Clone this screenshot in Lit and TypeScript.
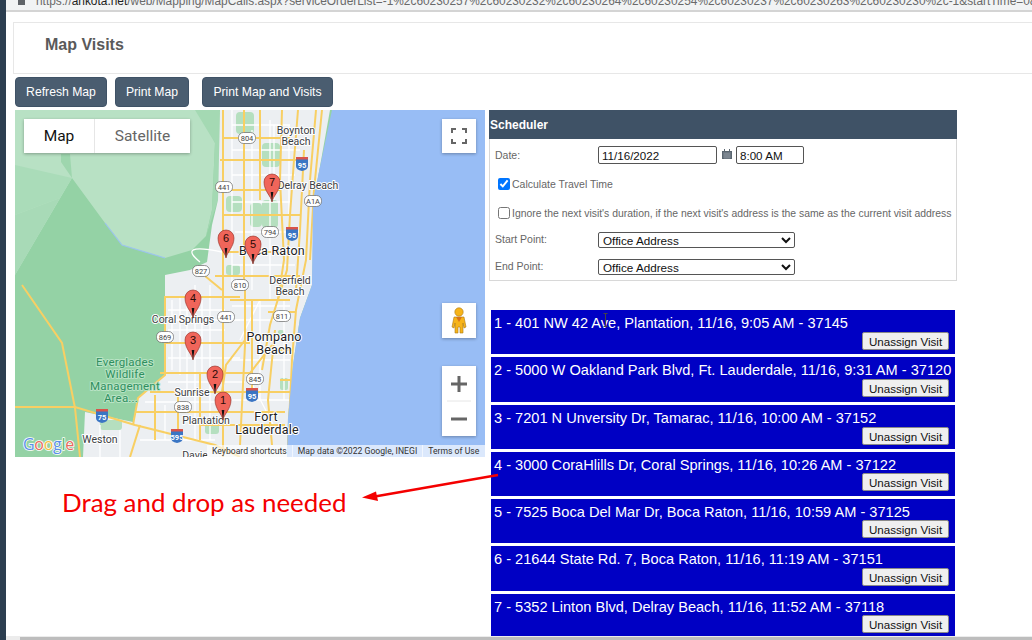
import { LitElement, html, css, svg } from "lit";
import { customElement } from "lit/decorators.js";

const VISITS = [
  ["1 - 401 NW 42 Ave, Plantation, 11/16, 9:05 AM - 37145", 44],
  ["2 - 5000 W Oakland Park Blvd, Ft. Lauderdale, 11/16, 9:31 AM - 37120", 45],
  ["3 - 7201 N Unversity Dr, Tamarac, 11/16, 10:00 AM - 37152", 44],
  ["4 - 3000 CoraHlills Dr, Coral Springs, 11/16, 10:26 AM - 37122", 44],
  ["5 - 7525 Boca Del Mar Dr, Boca Raton, 11/16, 10:59 AM - 37125", 44],
  ["6 - 21644 State Rd. 7, Boca Raton, 11/16, 11:19 AM - 37151", 45],
  ["7 - 5352 Linton Blvd, Delray Beach, 11/16, 11:52 AM - 37118", 44],
] as [string, number][];

const MAJOR = [
  "M22 285L62 343L75 408L80 457",
  "M15 407H75L135 425L215 445L240 457",
  "M223 110V457", "M244 110V290", "M260 110V200", "M282 110L280 180L284 260L278 300",
  "M298 110L294 160L290 215L287 270L270 325L262 370",
  "M316 110L310 180L306 260L296 310L292 360L288 445",
  "M322 110L314 190L310 260", "M304 150L300 230L296 290",
  "M222 138H290", "M220 160H300", "M222 190H280", "M222 215H300", "M222 252H290", "M215 276H300",
  "M240 297H165V375L138 398L133 425", "M165 343H250", "M160 373H250L272 345", "M150 392H290", "M135 412H285",
  "M155 395V440", "M140 425L130 457", "M245 340L226 365L222 392", "M178 392V440", "M200 373V440",
  "M275 330L268 400L272 445", "M245 290V345L240 445", "M280 380H293", "M205 276L222 290", "M230 300H290", "M252 300V392",
  "M200 425H285", "M268 312H296", "M256 350H292",
];
const MINOR = [
  "M232 110V290", "M252 130V290", "M270 120V300", "M195 285V440", "M180 297V375", "M210 285V440", "M172 300V370", "M187 300V392", "M202 300V373",
  "M168 320H240", "M168 358H240", "M168 310H225", "M168 330H225", "M232 320H290", "M232 360H290", "M232 400H290", "M168 382H245", "M232 306H290",
  "M232 150H300", "M232 175H295", "M235 232H300", "M232 125H290", "M232 202H290", "M232 265H295", "M200 262C185 250 190 245 222 252",
  "M100 425V457", "M120 430V457", "M140 440H215", "M165 405V440", "M145 402H215", "M260 300V400", "M284 300V400",
  "M250 380L276 430", "M260 300L240 340", "M274 125V200", "M289 125V215",
];
const SHIELDS: [string, number, number][] = [
  ["441", 224, 187], ["441", 226, 317], ["827", 201, 271], ["804", 247, 138], ["794", 270, 232],
  ["A1A", 313, 201], ["811", 282, 316], ["845", 255, 379], ["869", 165, 337], ["838", 183, 407], ["810", 240, 285],
];
const INTERSTATES: [string, number, number][] = [
  ["95", 302, 164], ["95", 292, 234], ["95", 252, 395], ["75", 102, 416], ["595", 177, 436],
];
const LABELS: [string, number, number, string?][] = [
  ["Boynton", 296, 134], ["Beach", 296, 145], ["Delray Beach", 308, 189], ["Deerfield", 290, 284], ["Beach", 290, 295],
  ["Coral Springs", 183, 323], ["Sunrise", 192, 396], ["Plantation", 206, 424], ["Weston", 100, 443], ["Davie", 195, 459],
  ["Boca Raton", 272, 255, "big"], ["Pompano", 274, 341, "big"], ["Beach", 274, 354, "big"], ["Fort", 266, 421, "big"], ["Lauderdale", 267, 434, "big"],
  ["Everglades", 125, 366, "park"], ["Wildlife", 125, 378, "park"], ["Management", 125, 390, "park"], ["Area...", 121, 402, "park"],
];
const PINS: [string, number, number][] = [
  ["7", 272, 202], ["6", 226, 258], ["5", 253, 264], ["4", 193, 318], ["3", 193, 360], ["2", 215, 394], ["1", 223, 420],
];

@customElement("map-canvas")
class MapCanvas extends LitElement {
  static styles = css`
    :host { display: block; position: relative; width: 470px; height: 347px; overflow: hidden; }
    svg.map { display: block; width: 470px; height: 347px; }
    .lbl { font: 400 10.5px Roboto, sans-serif; fill: #3c4043; text-anchor: middle; paint-order: stroke; stroke: #fff; stroke-width: 2px; stroke-linejoin: round; }
    .big { font: 400 12.5px Roboto, sans-serif; fill: #202124; letter-spacing: .2px; }
    .park { font: 400 11.5px Roboto, sans-serif; fill: #2f8f5f; stroke: #b8e3c4; letter-spacing: .2px; }
    .shield { font: 400 7.5px Roboto, sans-serif; fill: #444; text-anchor: middle; }
    .inter { font: 700 7.5px Roboto, sans-serif; fill: #fff; text-anchor: middle; }
    .pinnum { font: 400 11px "Liberation Sans", sans-serif; fill: #2a0a06; text-anchor: middle; }
    .goog { font: 500 16px "Open Sans", sans-serif; paint-order: stroke; stroke: #fff; stroke-width: 1.6px; stroke-linejoin: round; letter-spacing: -.3px; }
    .ctl { position: absolute; background: #fff; box-shadow: 0 1px 3px rgba(0,0,0,.3); }
    .types { left: 9px; top: 9px; width: 166px; height: 34px; display: flex; font: 400 15.5px Roboto, sans-serif; }
    .types span { display: flex; align-items: center; justify-content: center; }
    .types .on { width: 70px; color: #111; border-right: 1px solid #e6e6e6; }
    .types .off { flex: 1; color: #666; }
    .full { left: 427px; top: 9px; width: 34px; height: 34px; }
    .peg { left: 427px; top: 193px; width: 34px; height: 35px; }
    .zoom { left: 427px; top: 256px; width: 34px; height: 70px; }
    .ctl svg { display: block; }
    .attr { position: absolute; left: 192px; right: 0; bottom: 0; height: 12px; background: rgba(255,255,255,.65); display: flex; font: 400 8.65px Roboto, sans-serif; color: #333; line-height: 12px; white-space: nowrap; }
    .attr span { padding: 0 5px; }
    .attr .b { border-left: 1px solid rgba(255,255,255,.6); }
  `;
  render() {
    return html`
      <svg class="map" viewBox="15 110 470 347" xmlns="http://www.w3.org/2000/svg">
        <rect x="15" y="110" width="470" height="347" fill="#94d2a5"/>
        <path d="M15 110H200L215 143L212 210L206 236L192 250L165 258L122 245L105 223L72 178L15 275Z" fill="#b8e1c4"/>
        <path d="M15 215L60 198L15 275Z" fill="#a8dab7"/>
        <path d="M15 165L72 178L60 198L15 215Z" fill="#aadcb9"/>
        <path d="M61 154H70L72 178L61 162Z" fill="#9ed6ae"/>
        <path d="M195 110H220L218 200L206 236L212 210L215 143Z" fill="#a4d9b3"/>
        <path d="M105 223L122 245L165 258" fill="none" stroke="#9cc4ee" stroke-width="1.2"/>
        <path d="M220 110H330L314 200L312 285L300 318L293 365L288 418L287 457H83L85 412L133 422L138 398L165 375L165 275L190 270L207 262L212 225L218 200Z" fill="#eceff2"/>
        <g fill="#b5dfbf">
          <rect x="236" y="112" width="18" height="22" rx="4"/><rect x="262" y="143" width="18" height="24" rx="4"/>
          <rect x="250" y="203" width="12" height="24" rx="4"/><rect x="262" y="200" width="16" height="28" rx="4"/><rect x="226" y="196" width="16" height="16" rx="4"/>
          <rect x="226" y="265" width="14" height="10" rx="3"/><rect x="205" y="418" width="14" height="16" rx="3"/><rect x="100" y="420" width="22" height="10" rx="3"/>
          <rect x="278" y="330" width="6" height="10" rx="2"/><rect x="280" y="378" width="8" height="12" rx="2"/>
        </g>
        ${MINOR.map((d) => svg`<path d=${d} fill="none" stroke="#fff" stroke-width="1.3"/>`)}
        ${MAJOR.map((d) => svg`<path d=${d} fill="none" stroke="#f8cf63" stroke-width="2"/>`)}
        <path d="M332 110H485V457H287L288 418L293 365L300 318L312 285L313 200Z" fill="#98bdf5"/>
        ${SHIELDS.map(([t, x, y]) => svg`
          <rect x=${x - 8.5} y=${y - 5.5} width="17" height="11" rx="5" fill="#fff" stroke="#666" stroke-width=".7"/>
          <text class="shield" x=${x} y=${y + 2.7}>${t}</text>`)}
        ${INTERSTATES.map(([t, x, y]) => svg`
          <path d="M${x - 6} ${y - 7}H${x + 6}V${y + 2}Q${x + 6} ${y + 6} ${x} ${y + 7}Q${x - 6} ${y + 6} ${x - 6} ${y + 2}Z" fill="#3a75c4"/>
          <rect x=${x - 6} y=${y - 7} width="12" height="2.5" fill="#d9534a"/>
          <text class="inter" x=${x} y=${y + 3.5}>${t}</text>`)}
        ${LABELS.map(([t, x, y, c]) => svg`<text class="lbl ${c ?? ""}" x=${x} y=${y}>${t}</text>`)}
        ${PINS.map(([n, x, y]) => svg`
          <g transform="translate(${x} ${y})">
            <path d="M0 0C-1 -6 -8 -11 -8 -20A8 8 0 1 1 8 -20C8 -11 1 -6 0 0Z" fill="#f0655a" stroke="#8e2a20" stroke-width=".6"/>
            <path d="M0 0L-1.3 -10H1.3Z" fill="#111"/>
            <text class="pinnum" x="0" y="-16">${n}</text>
          </g>`)}
        <text class="goog" x="23" y="450"><tspan fill="#5a8fe8">G</tspan><tspan fill="#e8695c">o</tspan><tspan fill="#f3c13f">o</tspan><tspan fill="#5a8fe8">g</tspan><tspan fill="#5ab56d">l</tspan><tspan fill="#e8695c">e</tspan></text>
      </svg>
      <div class="ctl types"><span class="on">Map</span><span class="off">Satellite</span></div>
      <div class="ctl full">
        <svg width="34" height="34" viewBox="0 0 34 34"><path d="M10 14V10H14M20 10H24V14M24 20V24H20M14 24H10V20" fill="none" stroke="#666" stroke-width="2"/></svg>
      </div>
      <div class="ctl peg">
        <svg width="34" height="35" viewBox="0 0 34 35">
          <circle cx="17" cy="9" r="4.2" fill="#f7b419" stroke="#a9791a" stroke-width=".6"/>
          <path d="M12 14H22L24 24L22 25L21 20V30H18V24H16V30H13V20L12 25L10 24Z" fill="#f7b419" stroke="#a9791a" stroke-width=".6"/>
          <path d="M14 14L17 19L20 14Z" fill="#d9741a"/>
        </svg>
      </div>
      <div class="ctl zoom">
        <svg width="34" height="70" viewBox="0 0 34 70">
          <path d="M17 10V26M9 18H25" stroke="#666" stroke-width="3"/>
          <path d="M5 35H29" stroke="#e6e6e6" stroke-width="1"/>
          <path d="M9 53H25" stroke="#666" stroke-width="3"/>
        </svg>
      </div>
      <div class="attr"><span>Keyboard shortcuts</span><span class="b">Map data ©2022 Google, INEGI</span><span class="b">Terms of Use</span></div>
    `;
  }
}

@customElement("app-root")
class AppRoot extends LitElement {
  static styles = css`
    :host { display: block; position: relative; width: 1032px; height: 640px; overflow: hidden; background: #fff; font-family: "Liberation Sans", Arial, sans-serif; }
    .frame { display: flex; height: 640px; }
    .rail { width: 6px; flex: none; background: #2c3e50; }
    .page { flex: 1; min-width: 0; }
    .url { height: 10px; padding-left: 12px; background: #f1f3f4; border-bottom: 2px solid #d4d4d4; display: flex; gap: 11px; overflow: hidden; white-space: nowrap; color: #6a6a6a; font-size: 11.9px; line-height: 16px; }
    .url i { width: 7px; height: 5px; background: #5f6368; flex: none; }
    .url span { margin-top: -7px; }
    .url b { font-weight: 400; color: #222; }
    .head { box-sizing: border-box; margin: 10px 0 0 7px; height: 52px; border: 1px solid #e7e7e7; border-right: 0; display: flex; align-items: center; padding: 0 0 7px 31px; font-size: 16px; font-weight: 700; color: #5a5a5a; }
    .btns { display: flex; margin: 3px 0 0 9px; height: 30px; }
    .btn { height: 30px; box-sizing: border-box; border: 1px solid #3f5266; border-radius: 4px; background: #4a5d70; color: #fff; font: 400 12.2px "Liberation Sans", sans-serif; padding: 0; }
    .b1 { width: 92px; margin-right: 8px; } .b2 { width: 74px; margin-right: 13px; } .b3 { width: 131px; }
    .main { display: flex; margin: 3px 0 0 9px; gap: 4px; }
    .left { width: 470px; flex: none; }
    .note { margin: 28px 0 0 47px; font: 400 25.9px/34px Lato, sans-serif; color: #f40000; white-space: nowrap; }
    .sched { width: 468px; box-sizing: border-box; height: 171px; border: 1px solid #d8d8d8; border-top: 0; }
    .sched h2 { margin: 0 -1px; height: 29px; background: #3f5266; color: #fff; font-size: 12px; line-height: 30px; font-weight: 700; padding-left: 1px; }
    .form { font-size: 10.5px; color: #666; }
    .row { display: flex; align-items: center; }
    .row label.k { width: 108px; padding-left: 5px; box-sizing: border-box; }
    .r1 { margin-top: 7px; height: 18px; }
    .r2 { margin: 12px 0 0 8px; height: 16px; }
    .r3 { margin: 13px 0 0 8px; height: 16px; white-space: nowrap; font-size: 10.4px; }
    .r4 { margin-top: 11px; height: 16px; }
    .r5 { margin-top: 11px; height: 16px; }
    .r4 label.k, .r5 label.k { margin-top: -2px; }
    input[type="text"] { box-sizing: border-box; height: 18px; border: 1px solid #555; border-radius: 2px; font: 400 11.6px "Liberation Sans", sans-serif; color: #111; padding: 0 3px; margin: 0; }
    .date { width: 119px; } .time { width: 68px; }
    .cal { margin: -3px 4px 0 5px; display: block; }
    input[type="checkbox"] { width: 12px; height: 12px; margin: 0 2px 0 0; }
    select { box-sizing: border-box; width: 197px; height: 16px; font: 400 11.7px "Liberation Sans", sans-serif; padding: 0; margin: 0; color: #111; background: #fff; border: 1px solid #555; border-radius: 2px; }
    .visits { margin: 29px 0 0 2px; width: 464px; display: flex; flex-direction: column; gap: 3px; }
    .visit { box-sizing: border-box; background: #0000c4; color: #fff; font-size: 14.6px; line-height: 17px; padding: 5px 6px 0 3px; white-space: nowrap; }
    .visit div { display: flex; justify-content: flex-end; margin-top: 0; }
    .visit:nth-child(4) div, .visit:nth-child(5) div, .visit:nth-child(7) div { margin-top: -1px; }
    .visit button { width: 87px; height: 18px; box-sizing: border-box; padding: 0; background: #efefef; border: 1px solid #8a8a8a; border-radius: 2px; font: 400 11.6px "Liberation Sans", sans-serif; color: #111; }
    .arrow { position: absolute; left: 0; top: 0; pointer-events: none; }
    .sb { position: absolute; left: 6px; right: 0; bottom: 0; height: 4px; background: #ececec; }
    .sb i { position: absolute; left: 14px; right: 0; top: 1px; bottom: 0; background: #bdbdbd; display: block; }
  `;
  render() {
    return html`
      <div class="frame">
        <div class="rail"></div>
        <div class="page">
          <div class="url"><i></i><span>https://<b>ankota.net</b>/web/Mapping/MapCalls.aspx?serviceOrderList=-1%2c60230257%2c60230232%2c60230264%2c60230254%2c60230237%2c60230263%2c60230230%2c-1&amp;startTime=08%3a00</span></div>
          <div class="head">Map Visits</div>
          <div class="btns">
            <button class="btn b1">Refresh Map</button>
            <button class="btn b2">Print Map</button>
            <button class="btn b3">Print Map and Visits</button>
          </div>
          <div class="main">
            <div class="left">
              <map-canvas></map-canvas>
              <div class="note">Drag and drop as needed</div>
            </div>
            <div class="right">
              <section class="sched">
                <h2>Scheduler</h2>
                <div class="form">
                  <div class="row r1"><label class="k">Date:</label><input class="date" type="text" value="11/16/2022"/>
                    <svg class="cal" width="10" height="10" viewBox="0 0 10 10"><path d="M0 2H10V10H0Z" fill="#5a6670"/><path d="M2 0H3V2H2ZM7 0H8V2H7Z" fill="#5a6670"/><path d="M1 4H9M1 6H9M1 8H9M3 4V10M5 4V10M7 4V10" stroke="#aab2b8" stroke-width=".5"/></svg>
                    <input class="time" type="text" value="8:00 AM"/></div>
                  <div class="row r2"><input type="checkbox" checked/><span>Calculate Travel Time</span></div>
                  <div class="row r3"><input type="checkbox"/><span>Ignore the next visit's duration, if the next visit's address is the same as the current visit address</span></div>
                  <div class="row r4"><label class="k">Start Point:</label><select><option>Office Address</option></select></div>
                  <div class="row r5"><label class="k">End Point:</label><select><option>Office Address</option></select></div>
                </div>
              </section>
              <div class="visits">
                ${VISITS.map(([t, h]) => html`<div class="visit" style="height:${h}px">${t}<div><button>Unassign Visit</button></div></div>`)}
              </div>
            </div>
          </div>
        </div>
      </div>
      <svg class="arrow" width="1032" height="640" viewBox="0 0 1032 640">
        <path d="M498 475L372 497" stroke="#f40000" stroke-width="2.4" fill="none"/>
        <path d="M362 497.500L376 491.500L378 501Z" fill="#f40000"/>
        <path d="M603.500 313.500H607.500M605.500 313.500V326.500M603.500 326.500H607.500" stroke="#444" stroke-width="1" fill="none"/>
      </svg>
      <div class="sb"><i></i></div>
    `;
  }
}
